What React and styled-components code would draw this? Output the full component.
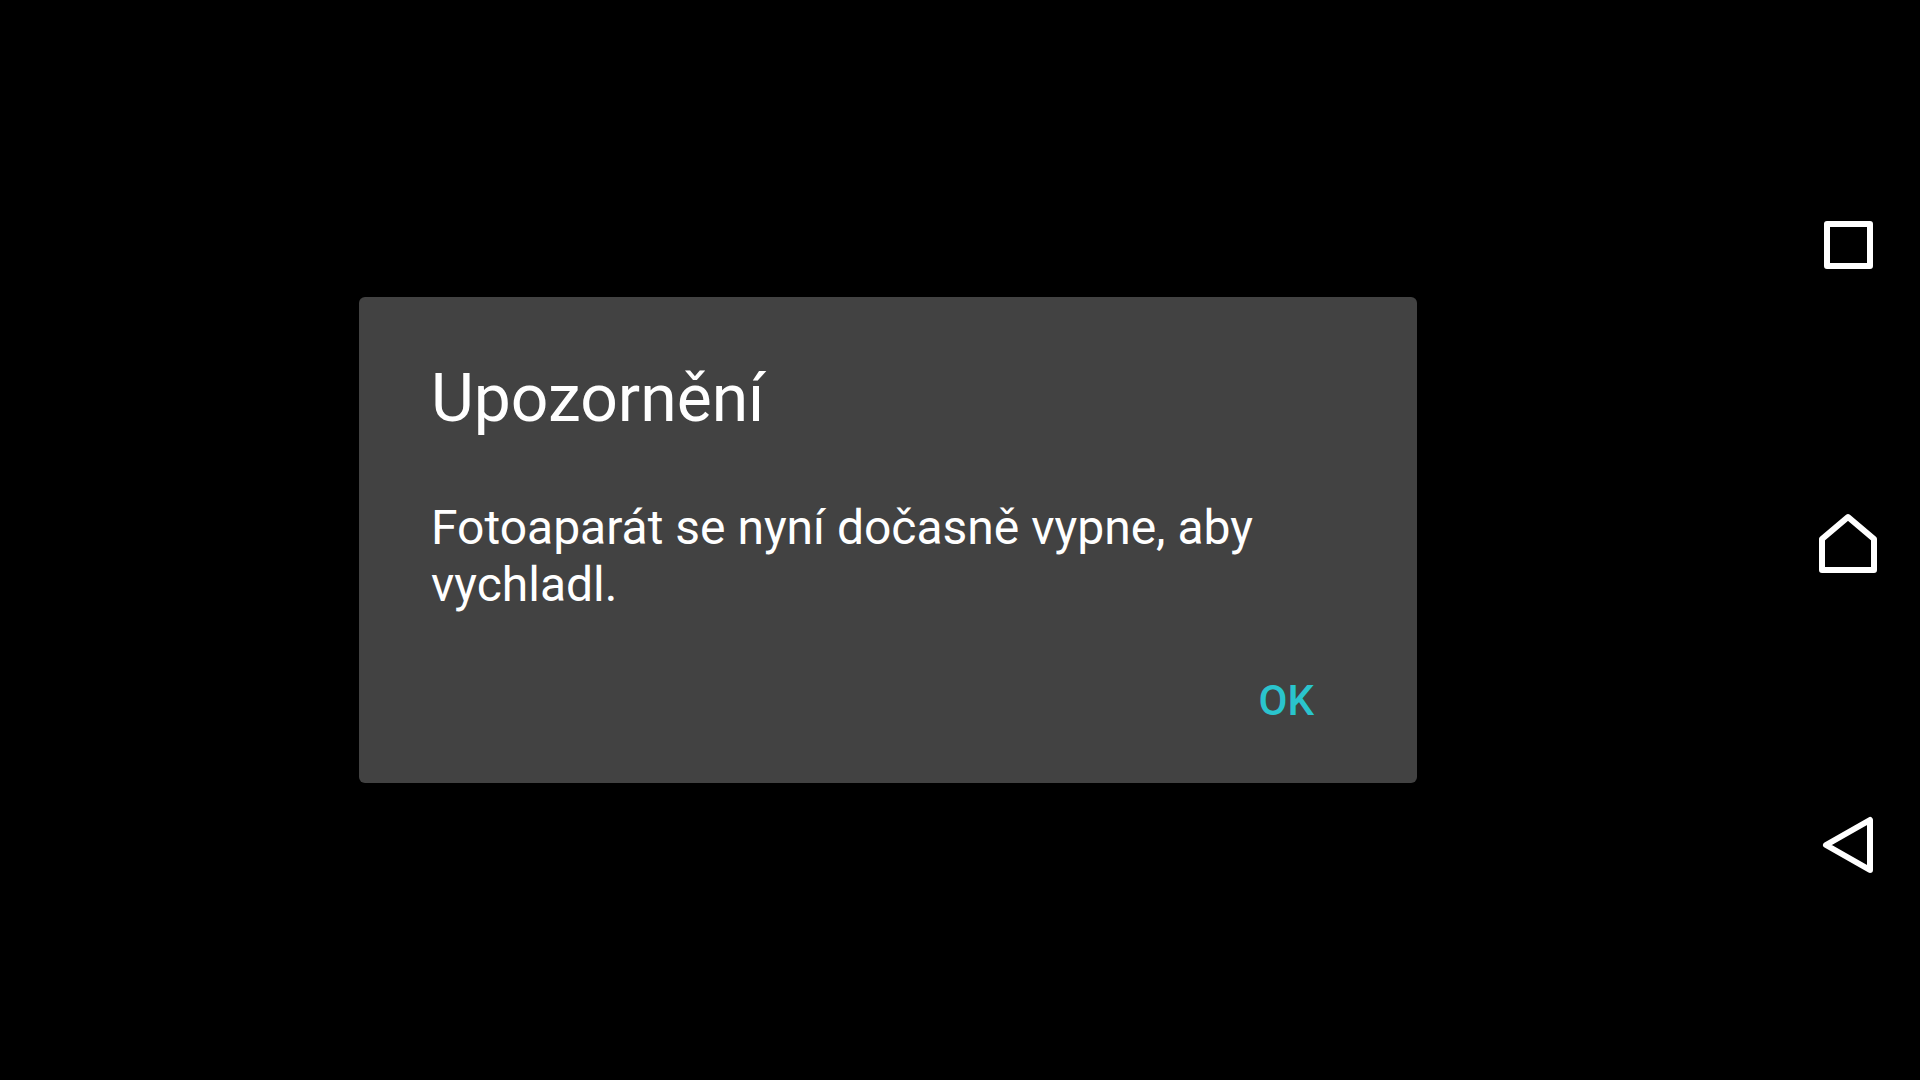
import React from "react";
import styled, { createGlobalStyle } from "styled-components";

const GlobalStyle = createGlobalStyle`
  *, *::before, *::after { box-sizing: border-box; }
  body {
    margin: 0;
    background: #000;
    color: #fff;
    font-family: Roboto, "Noto Sans", sans-serif;
  }
`;

const Screen = styled.div`
  display: flex;
  min-height: 100vh;
`;

const Stage = styled.main`
  flex: 1;
  display: flex;
  align-items: center;
  justify-content: center;
  padding: 24px;
`;

const Dialog = styled.section`
  width: 100%;
  max-width: 1058px;
  padding: 63px 72px 28px;
  border-radius: 6px;
  background: #424242;
`;

const Title = styled.h1`
  margin: 0 0 61px;
  font-size: 66px;
  line-height: 78px;
  font-weight: 400;
`;

const Message = styled.p`
  margin: 0;
  font-size: 48px;
  line-height: 57px;
`;

const Actions = styled.div`
  display: flex;
  justify-content: flex-end;
  margin-top: 34px;
`;

const TextButton = styled.button`
  height: 108px;
  padding: 0 31px;
  border: 0;
  background: none;
  color: #2ac4cd;
  font-family: inherit;
  font-size: 42px;
  line-height: 50px;
  font-weight: 500;
  cursor: pointer;
`;

const NavBar = styled.nav`
  width: 144px;
  display: flex;
  flex-direction: column;
  align-items: stretch;
  justify-content: center;
  padding-top: 10px;
`;

const NavButton = styled.button`
  flex: 0 1 300px;
  display: flex;
  align-items: center;
  justify-content: center;
  padding: 0;
  border: 0;
  background: none;
  color: #fff;
  cursor: pointer;
`;

const Icon = styled.svg`
  width: 72px;
  height: 72px;
  fill: none;
  stroke: currentColor;
  stroke-width: 6px;
  stroke-linejoin: round;
`;

const navItems = [
  { label: "Přehled", path: "M15 15H58V57H15Z" },
  { label: "Domů", path: "M10 30L36 8L62 30V61H10Z" },
  { label: "Zpět", path: "M14 36L58 11V61Z" },
];

export default function App() {
  return (
    <>
      <GlobalStyle />
      <Screen>
        <Stage>
          <Dialog role="alertdialog" aria-labelledby="title" aria-describedby="message">
            <Title id="title">Upozornění</Title>
            <Message id="message">Fotoaparát se nyní dočasně vypne, aby vychladl.</Message>
            <Actions>
              <TextButton type="button">OK</TextButton>
            </Actions>
          </Dialog>
        </Stage>
        <NavBar>
          {navItems.map(({ label, path }) => (
            <NavButton key={label} type="button" aria-label={label}>
              <Icon viewBox="0 0 72 72" aria-hidden="true">
                <path d={path} />
              </Icon>
            </NavButton>
          ))}
        </NavBar>
      </Screen>
    </>
  );
}
